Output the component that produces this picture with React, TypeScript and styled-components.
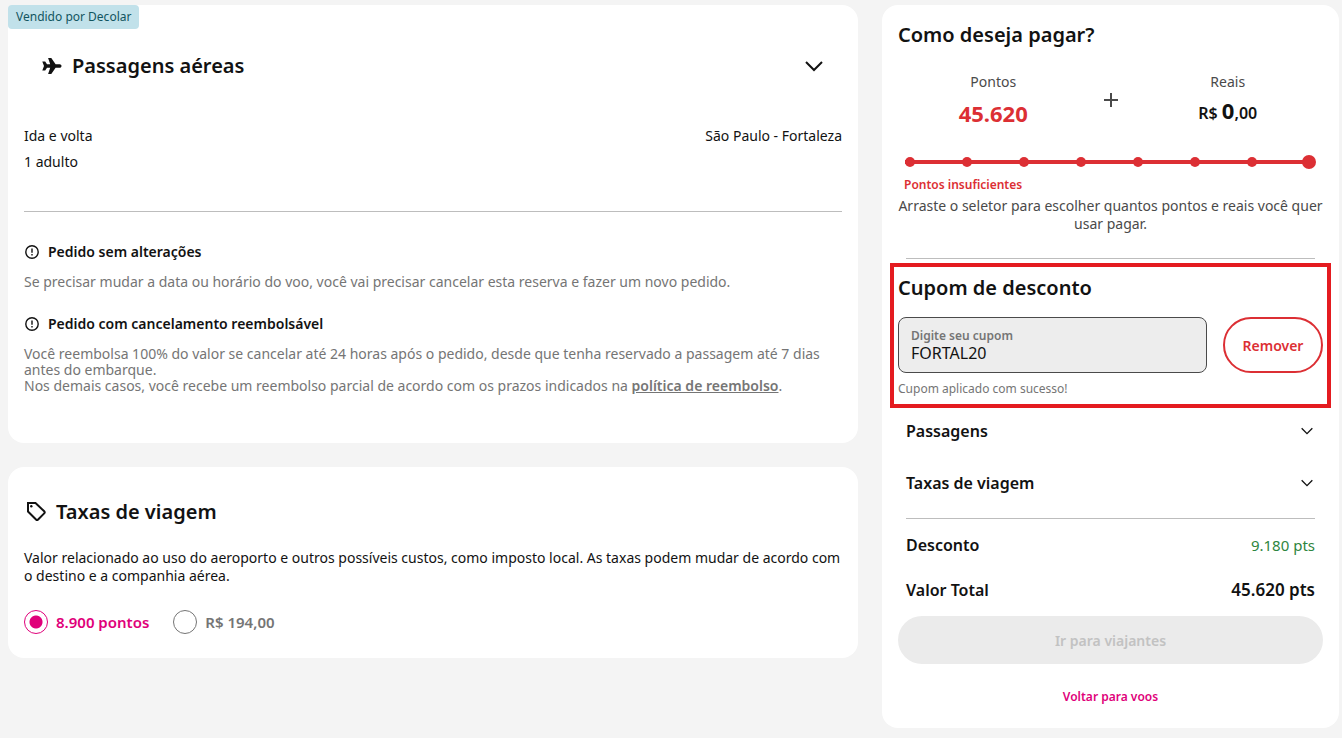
import React, { useState } from "react";
import styled, { createGlobalStyle } from "styled-components";

const ink = "#121212";
const grey = "#757575";
const red = "#dc2f34";
const pink = "#e0007a";

const GlobalStyle = createGlobalStyle`
  *, *::before, *::after { box-sizing: border-box; }
  body {
    margin: 0;
    background: #f4f4f4;
    color: ${ink};
    font-family: "Noto Sans", "Open Sans", sans-serif;
    font-size: 14px;
    line-height: 20px;
  }
  h2, h3, p { margin: 0; }
  button, input { font-family: inherit; }
`;

const Page = styled.main`
  display: grid;
  grid-template-columns: minmax(0, 850fr) minmax(0, 457fr);
  align-items: start;
  gap: 24px;
  padding: 5px 3px 10px 8px;
`;

const Column = styled.div`
  display: flex;
  flex-direction: column;
  gap: 24px;
`;

const Card = styled.section<{ $top?: number; $bottom: number }>`
  background: #fff;
  border-radius: 16px;
  padding: ${(p) => p.$top ?? 0}px 16px ${(p) => p.$bottom}px;
`;

const Badge = styled.span`
  display: inline-block;
  margin-left: -16px;
  padding: 4px 8px;
  border-radius: 4px;
  background: #c1e1ea;
  color: #125560;
  font-size: 12px;
  line-height: 16px;
  vertical-align: top;
`;

const Title = styled.h2`
  font-size: 20px;
  font-weight: 600;
  line-height: 28px;
`;

const TitleRow = styled.div<{ $inset?: boolean }>`
  display: flex;
  align-items: center;
  gap: 8px;
  padding: ${(p) => (p.$inset ? "23px 16px 0" : "0")};
`;

const IconButton = styled.button`
  display: flex;
  margin-left: auto;
  padding: 0;
  border: 0;
  background: none;
  color: ${ink};
  cursor: pointer;
`;

const Trip = styled.div`
  display: flex;
  justify-content: space-between;
  padding: 43px 0 36px;
  line-height: 26px;
`;

const Divider = styled.hr<{ $inset?: boolean }>`
  height: 1px;
  margin: 0 ${(p) => (p.$inset ? 8 : 0)}px;
  border: 0;
  background: #bdbdbd;
`;

const Policy = styled.div`
  display: flex;
  flex-direction: column;
  gap: 12px;
`;

const Policies = styled.div`
  display: flex;
  flex-direction: column;
  gap: 24px;
  padding-top: 30px;
`;

const PolicyTitle = styled.h3`
  display: flex;
  align-items: center;
  gap: 8px;
  font-size: 14px;
  font-weight: 600;
  line-height: 20px;
`;

const PolicyText = styled.p`
  color: ${grey};
  line-height: 16px;
`;

const PolicyLink = styled.a`
  color: inherit;
  font-weight: 600;
`;

const TaxText = styled.p`
  margin: 23px 0 25px;
  line-height: 18px;
`;

const Options = styled.div`
  display: flex;
  gap: 24px;
`;

const Option = styled.label`
  display: flex;
  align-items: center;
  gap: 8px;
  color: ${grey};
  font-size: 15px;
  font-weight: 600;
  cursor: pointer;
  &:has(input:checked) { color: ${pink}; }
`;

const Radio = styled.input`
  appearance: none;
  width: 24px;
  height: 24px;
  margin: 0;
  border: 1px solid ${grey};
  border-radius: 50%;
  &:checked {
    border-color: ${pink};
    background: radial-gradient(circle, ${pink} 6px, transparent 7px);
  }
`;

const Split = styled.div`
  display: grid;
  grid-template-columns: 1fr auto 1fr;
  align-items: center;
  column-gap: 14px;
  margin: 23px 0 27px;
  text-align: center;
`;

const Amount = styled.div`
  display: flex;
  flex-direction: column;
  gap: 7px;
  color: #4a4a4a;
`;

const AmountValue = styled.strong<{ $short?: boolean }>`
  color: ${(p) => (p.$short ? red : ink)};
  font-size: ${(p) => (p.$short ? 22 : 16)}px;
  font-weight: ${(p) => (p.$short ? 700 : 600)};
  line-height: 28px;
`;

const Whole = styled.b`
  font-size: 22px;
  font-weight: 700;
  line-height: 20px;
`;

const SliderBox = styled.div`
  display: grid;
  margin: 0 7px 0 5px;
  > * { grid-area: 1 / 1; }
`;

const Stops = styled.div`
  display: flex;
  align-items: center;
  justify-content: space-between;
  padding: 0 2px;
  background: linear-gradient(${red}, ${red}) center / calc(100% - 4px) 4px no-repeat;
`;

const Stop = styled.span`
  width: 10px;
  height: 10px;
  border-radius: 50%;
  background: ${red};
`;

const Range = styled.input`
  appearance: none;
  width: 100%;
  height: 16px;
  margin: 0;
  background: none;
  cursor: pointer;
  &::-webkit-slider-thumb {
    appearance: none;
    width: 14px;
    height: 14px;
    border-radius: 50%;
    background: ${red};
  }
`;

const Warning = styled.p`
  margin: 7px 6px 4px;
  color: ${red};
  font-size: 12px;
  font-weight: 600;
  line-height: 16px;
`;

const Help = styled.p`
  margin-bottom: 25px;
  color: #4a4a4a;
  line-height: 18px;
  text-align: center;
`;

const Coupon = styled.form`
  margin: 4px -8px 11px;
  padding: 7px 4px;
  border: 4px solid #e41b20;
`;

const CouponRow = styled.div`
  display: flex;
  gap: 16px;
  margin: 15px 0 8px;
`;

const Field = styled.label`
  display: flex;
  flex: 1;
  flex-direction: column;
  justify-content: center;
  min-width: 0;
  height: 56px;
  padding: 0 12px;
  border: 1px solid #4a4a4a;
  border-radius: 8px;
  background: #ededed;
  color: ${grey};
  font-size: 12px;
  font-weight: 600;
  line-height: 16px;
`;

const CouponInput = styled.input`
  width: 100%;
  height: 18px;
  padding: 0;
  border: 0;
  outline: 0;
  background: none;
  color: ${ink};
  font-size: 16px;
`;

const RemoveButton = styled.button`
  width: 100px;
  border: 2px solid ${red};
  border-radius: 28px;
  background: #fff;
  color: ${red};
  font-size: 14px;
  font-weight: 600;
  cursor: pointer;
`;

const Hint = styled.p`
  color: ${grey};
  font-size: 12px;
  line-height: 16px;
`;

const Line = styled.div<{ $bottom: number }>`
  display: flex;
  align-items: center;
  justify-content: space-between;
  padding: 0 8px ${(p) => p.$bottom}px;
  font-size: 16px;
  font-weight: 600;
  line-height: 24px;
`;

const Totals = styled.div`
  padding-top: 14px;
`;

const Discount = styled.span`
  color: #2e8540;
  font-size: 15px;
  font-weight: 400;
`;

const Total = styled.span`
  font-size: 17px;
`;

const Submit = styled.button`
  display: block;
  width: 100%;
  height: 48px;
  border: 0;
  border-radius: 24px;
  background: #ebebeb;
  color: #c2c2c2;
  font-size: 14px;
  font-weight: 600;
`;

const BackLink = styled.a`
  display: block;
  margin: 25px auto 0;
  width: max-content;
  color: ${pink};
  font-size: 12px;
  font-weight: 600;
  line-height: 16px;
  text-decoration: none;
`;

const Plane = () => (
  <svg width="24" height="24" viewBox="0 0 24 24" fill="currentColor" aria-hidden="true">
    <path d="M21.500 12c0-1-.8-1.800-1.800-1.800h-4.100L11.300 4H8.100l2.100 6.200H7L5.200 7.600H2.300L4 12l-1.700 4.400h2.900L7 13.800h3.200L8.100 20h3.200l4.300-6.200h4.100c1 0 1.800-.8 1.800-1.800z" />
  </svg>
);

const Tag = () => (
  <svg width="24" height="24" viewBox="0 0 24 24" fill="none" stroke="currentColor" strokeWidth="2" aria-hidden="true">
    <path d="M4 3h7.500l8.700 8.300a1.500 1.500 0 0 1 0 2.100l-6.100 6.100a1.500 1.500 0 0 1-2.100 0L4 11.500z" />
    <circle cx="7.300" cy="6.300" r="1.200" fill="currentColor" stroke="none" />
  </svg>
);

const Chevron = ({ size }: { size: number }) => (
  <svg width={size} height={size} viewBox="0 0 24 24" fill="none" stroke="currentColor" strokeWidth="2" aria-hidden="true">
    <path d="M4 8l8 8 8-8" />
  </svg>
);

const Info = () => (
  <svg width="16" height="16" viewBox="0 0 16 16" fill="none" stroke="currentColor" aria-hidden="true">
    <circle cx="8" cy="8" r="6.200" strokeWidth="1.400" />
    <path d="M8 4.500v4.300M8 10v1.500" strokeWidth="1.400" />
  </svg>
);

const Plus = () => (
  <svg width="16" height="16" viewBox="0 0 16 16" fill="none" stroke="#4a4a4a" strokeWidth="2" aria-hidden="true">
    <path d="M8 1v14M1 8h14" />
  </svg>
);

export default function App() {
  const [step, setStep] = useState(7);
  const [tax, setTax] = useState("pontos");
  const [coupon, setCoupon] = useState("FORTAL20");

  return (
    <>
      <GlobalStyle />
      <Page>
        <Column>
          <Card $bottom={49}>
            <Badge>Vendido por Decolar</Badge>
            <TitleRow $inset>
              <Plane />
              <Title>Passagens aéreas</Title>
              <IconButton type="button" aria-label="Expandir passagens aéreas">
                <Chevron size={24} />
              </IconButton>
            </TitleRow>
            <Trip>
              <div>
                <p>Ida e volta</p>
                <p>1 adulto</p>
              </div>
              <p>São Paulo - Fortaleza</p>
            </Trip>
            <Divider />
            <Policies>
              <Policy>
                <PolicyTitle><Info />Pedido sem alterações</PolicyTitle>
                <PolicyText>
                  Se precisar mudar a data ou horário do voo, você vai precisar cancelar esta reserva e fazer um novo pedido.
                </PolicyText>
              </Policy>
              <Policy>
                <PolicyTitle><Info />Pedido com cancelamento reembolsável</PolicyTitle>
                <PolicyText>
                  Você reembolsa 100% do valor se cancelar até 24 horas após o pedido, desde que tenha reservado a passagem até 7 dias antes do embarque.
                  <br />
                  Nos demais casos, você recebe um reembolso parcial de acordo com os prazos indicados na{" "}
                  <PolicyLink href="#politica">política de reembolso</PolicyLink>.
                </PolicyText>
              </Policy>
            </Policies>
          </Card>

          <Card $top={31} $bottom={24}>
            <TitleRow>
              <Tag />
              <Title>Taxas de viagem</Title>
            </TitleRow>
            <TaxText>
              Valor relacionado ao uso do aeroporto e outros possíveis custos, como imposto local. As taxas podem mudar de acordo com o destino e a companhia aérea.
            </TaxText>
            <Options>
              <Option>
                <Radio type="radio" name="tax" checked={tax === "pontos"} onChange={() => setTax("pontos")} />
                8.900 pontos
              </Option>
              <Option>
                <Radio type="radio" name="tax" checked={tax === "reais"} onChange={() => setTax("reais")} />
                R$ 194,00
              </Option>
            </Options>
          </Card>
        </Column>

        <Card as="aside" $top={16} $bottom={23}>
          <Title>Como deseja pagar?</Title>
          <Split>
            <Amount>
              <span>Pontos</span>
              <AmountValue $short>45.620</AmountValue>
            </Amount>
            <Plus />
            <Amount>
              <span>Reais</span>
              <AmountValue>R$ <Whole>0</Whole>,00</AmountValue>
            </Amount>
          </Split>
          <SliderBox>
            <Stops>
              {Array.from({ length: 8 }, (_, i) => <Stop key={i} />)}
            </Stops>
            <Range
              type="range"
              min={0}
              max={7}
              value={step}
              aria-label="Quantidade de pontos"
              onChange={(e) => setStep(Number(e.target.value))}
            />
          </SliderBox>
          <Warning>Pontos insuficientes</Warning>
          <Help>Arraste o seletor para escolher quantos pontos e reais você quer usar pagar.</Help>
          <Divider $inset />
          <Coupon onSubmit={(e) => e.preventDefault()}>
            <Title>Cupom de desconto</Title>
            <CouponRow>
              <Field>
                Digite seu cupom
                <CouponInput value={coupon} onChange={(e) => setCoupon(e.target.value)} />
              </Field>
              <RemoveButton type="button" onClick={() => setCoupon("")}>Remover</RemoveButton>
            </CouponRow>
            <Hint>Cupom aplicado com sucesso!</Hint>
          </Coupon>
          <Line $bottom={28}>
            Passagens
            <IconButton type="button" aria-label="Expandir passagens"><Chevron size={16} /></IconButton>
          </Line>
          <Line $bottom={23}>
            Taxas de viagem
            <IconButton type="button" aria-label="Expandir taxas de viagem"><Chevron size={16} /></IconButton>
          </Line>
          <Divider $inset />
          <Totals>
            <Line $bottom={21}>Desconto<Discount>9.180 pts</Discount></Line>
            <Line $bottom={14}>Valor Total<Total>45.620 pts</Total></Line>
          </Totals>
          <Submit type="button" disabled>Ir para viajantes</Submit>
          <BackLink href="#voos">Voltar para voos</BackLink>
        </Card>
      </Page>
    </>
  );
}
